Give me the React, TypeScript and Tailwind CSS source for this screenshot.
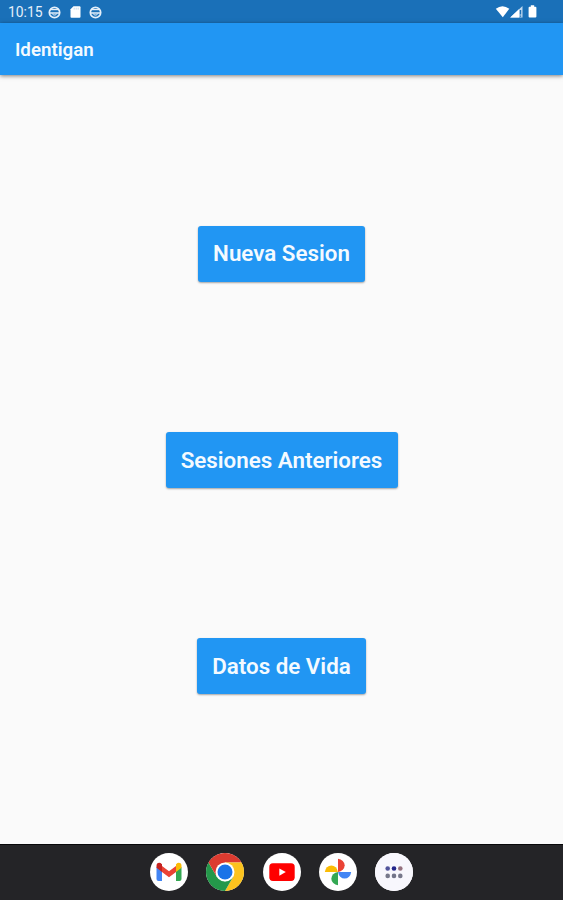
import type { ReactNode } from 'react';

function SyncFace() {
  return (
    <svg width="13" height="13" viewBox="0 0 13 13" fill="none" stroke="#e4effa">
      <circle cx="6.5" cy="6.5" r="5.2" strokeWidth="1.7" />
      <path d="M2.2 3.6H10.8" strokeWidth="1.2" />
      <path d="M1.5 7H11.5" strokeWidth="1.5" />
      <path d="M4.4 7.5L5.4 9H7.6L8.6 7.5" strokeWidth="1" />
    </svg>
  );
}

function StatusBar() {
  return (
    <div className="flex h-[23px] items-center bg-[#1a70b8] pr-[25px] pl-[8px] text-[#e4effa]">
      <span className="w-[40px] pt-px text-[13.9px] leading-[23px] whitespace-nowrap">10:15</span>
      <div className="mt-px flex items-center">
        <SyncFace />
        <svg className="ml-[9px]" width="11" height="12" viewBox="0 0 11 12" fill="#fff">
          <path d="M3.5.3H9.6Q10.5.3 10.5 1.2V10.8Q10.5 11.7 9.6 11.7H1.4Q.5 11.7.5 10.8V3.3Z" />
          <path d="M4.2 1.7V3.6M6.2 1.7V3.6M8.2 1.7V3.6" stroke="#b5d0e8" strokeWidth=".8" />
        </svg>
        <span className="w-[8px]" />
        <SyncFace />
      </div>
      <svg className="ml-auto" width="43" height="15" viewBox="0 -0.5 43 15" fill="#fff">
        <path d="M.8 4.3Q7.5-.8 14.3 4.3L7.8 12.8Z" />
        <path d="M27.5 1.4V13H15.2Z" fill="#c1d9ef" />
        <path d="M24 4.8V13H15.2Z" />
        <path d="M24.8 5.5H26.2V10H24.8ZM24.8 11H26.2V12.3H24.8Z" fill="#1a70b8" />
        <path d="M35.8.8H39.2V2.2H40.4Q41.4 2.2 41.4 3.2V12Q41.4 13 40.4 13H34.6Q33.6 13 33.6 12V3.2Q33.6 2.2 34.6 2.2H35.8Z" />
      </svg>
    </div>
  );
}

function ActionButton({ label, width }: { label: string; width: string }) {
  return (
    <button
      className={`${width} h-[56px] rounded-[3px] bg-[#2196f3] pt-px text-[22.35px] font-semibold whitespace-nowrap text-[#f4faff] shadow-[0_1px_2px_rgba(0,0,0,0.35)]`}
    >
      {label}
    </button>
  );
}

function DockIcon({ children }: { children: ReactNode }) {
  return (
    <svg width="38" height="38" viewBox="0 0 38 38">
      <circle cx="19" cy="19" r="19" fill="#fff" />
      {children}
    </svg>
  );
}

function Dock() {
  return (
    <nav className="flex h-[56px] items-center justify-center gap-[18.2px] border-t border-[#08080a] bg-[#242427] pb-px">
      <DockIcon>
        <path d="M6.5 14L12 18V28H8.5Q6.5 28 6.5 26Z" fill="#4285f4" />
        <path d="M26 18L31.5 14V26Q31.5 28 29.5 28H26Z" fill="#34a853" />
        <path d="M12 13L19 18.2 26 13V19L19 24.2 12 19Z" fill="#ea4335" />
        <path d="M6.5 13Q6.5 9.8 9.3 9.8Q10.3 9.8 12 11.2V19L6.5 14.8Z" fill="#c5221f" />
        <path d="M26 11.2Q27.7 9.8 28.7 9.8Q31.5 9.8 31.5 13V14.8L26 19Z" fill="#fbbc04" />
      </DockIcon>
      <DockIcon>
        <path d="M19 19L2.55 9.5A19 19 0 0 1 35.45 9.5H19Z" fill="#dc3b30" />
        <path d="M19 9.5H35.45A19 19 0 0 1 19 38L27.2 23.75Z" fill="#fcc31e" />
        <path d="M2.55 9.5L10.8 23.75 19 28.5 27.2 23.75 19 38A19 19 0 0 1 2.55 9.5Z" fill="#24984a" />
        <path d="M10.8 23.75L2.55 9.5H19Z" fill="#dc3b30" />
        <circle cx="19" cy="19" r="9.5" fill="#fff" />
        <circle cx="19" cy="19" r="7.5" fill="#1a73e8" />
      </DockIcon>
      <DockIcon>
        <rect x="6.3" y="10.3" width="25.4" height="17.6" rx="3.6" fill="#f00" />
        <path d="M16.3 15.5V22.7L22.8 19.1Z" fill="#fff" />
      </DockIcon>
      <DockIcon>
        <path d="M19 5.8A7.6 6.6 0 0 1 19 18.9Z" fill="#ea4335" />
        <path d="M32.2 19A6.6 7.4 0 0 1 19.1 19Z" fill="#4285f4" />
        <path d="M19 32.2A7.6 6.6 0 0 1 19 19.1Z" fill="#34a853" />
        <path d="M5.8 19A6.6 7.4 0 0 1 18.9 19Z" fill="#fbbc04" />
      </DockIcon>
      <DockIcon>
        <circle cx="19" cy="19" r="19" fill="#f8f7fd" />
        <circle cx="12.7" cy="15.5" r="2.3" fill="#51539b" />
        <circle cx="19" cy="15.5" r="2.3" fill="#24268b" />
        <circle cx="25.3" cy="15.5" r="2.3" fill="#95717f" />
        <circle cx="12.7" cy="22.9" r="2.3" fill="#77788b" />
        <circle cx="19" cy="22.9" r="2.3" fill="#727489" />
        <circle cx="25.3" cy="22.9" r="2.3" fill="#77788b" />
      </DockIcon>
    </nav>
  );
}

export default function App() {
  return (
    <div className="flex h-[900px] w-[563px] flex-col overflow-hidden bg-[#fafafa] font-[Roboto,sans-serif]">
      <StatusBar />
      <header className="flex h-[52px] items-center bg-[#2196f3] pt-[3px] pl-[15px] shadow-[0_1px_4px_rgba(0,0,0,0.5)]">
        <h1 className="text-[18.7px] font-semibold text-[#f4faff]">Identigan</h1>
      </header>
      <main className="flex grow flex-col items-center gap-[150.3px] pt-[150.5px]">
        <ActionButton label="Nueva Sesion" width="w-[167px]" />
        <ActionButton label="Sesiones Anteriores" width="w-[232px]" />
        <ActionButton label="Datos de Vida" width="w-[169px]" />
      </main>
      <Dock />
    </div>
  );
}
